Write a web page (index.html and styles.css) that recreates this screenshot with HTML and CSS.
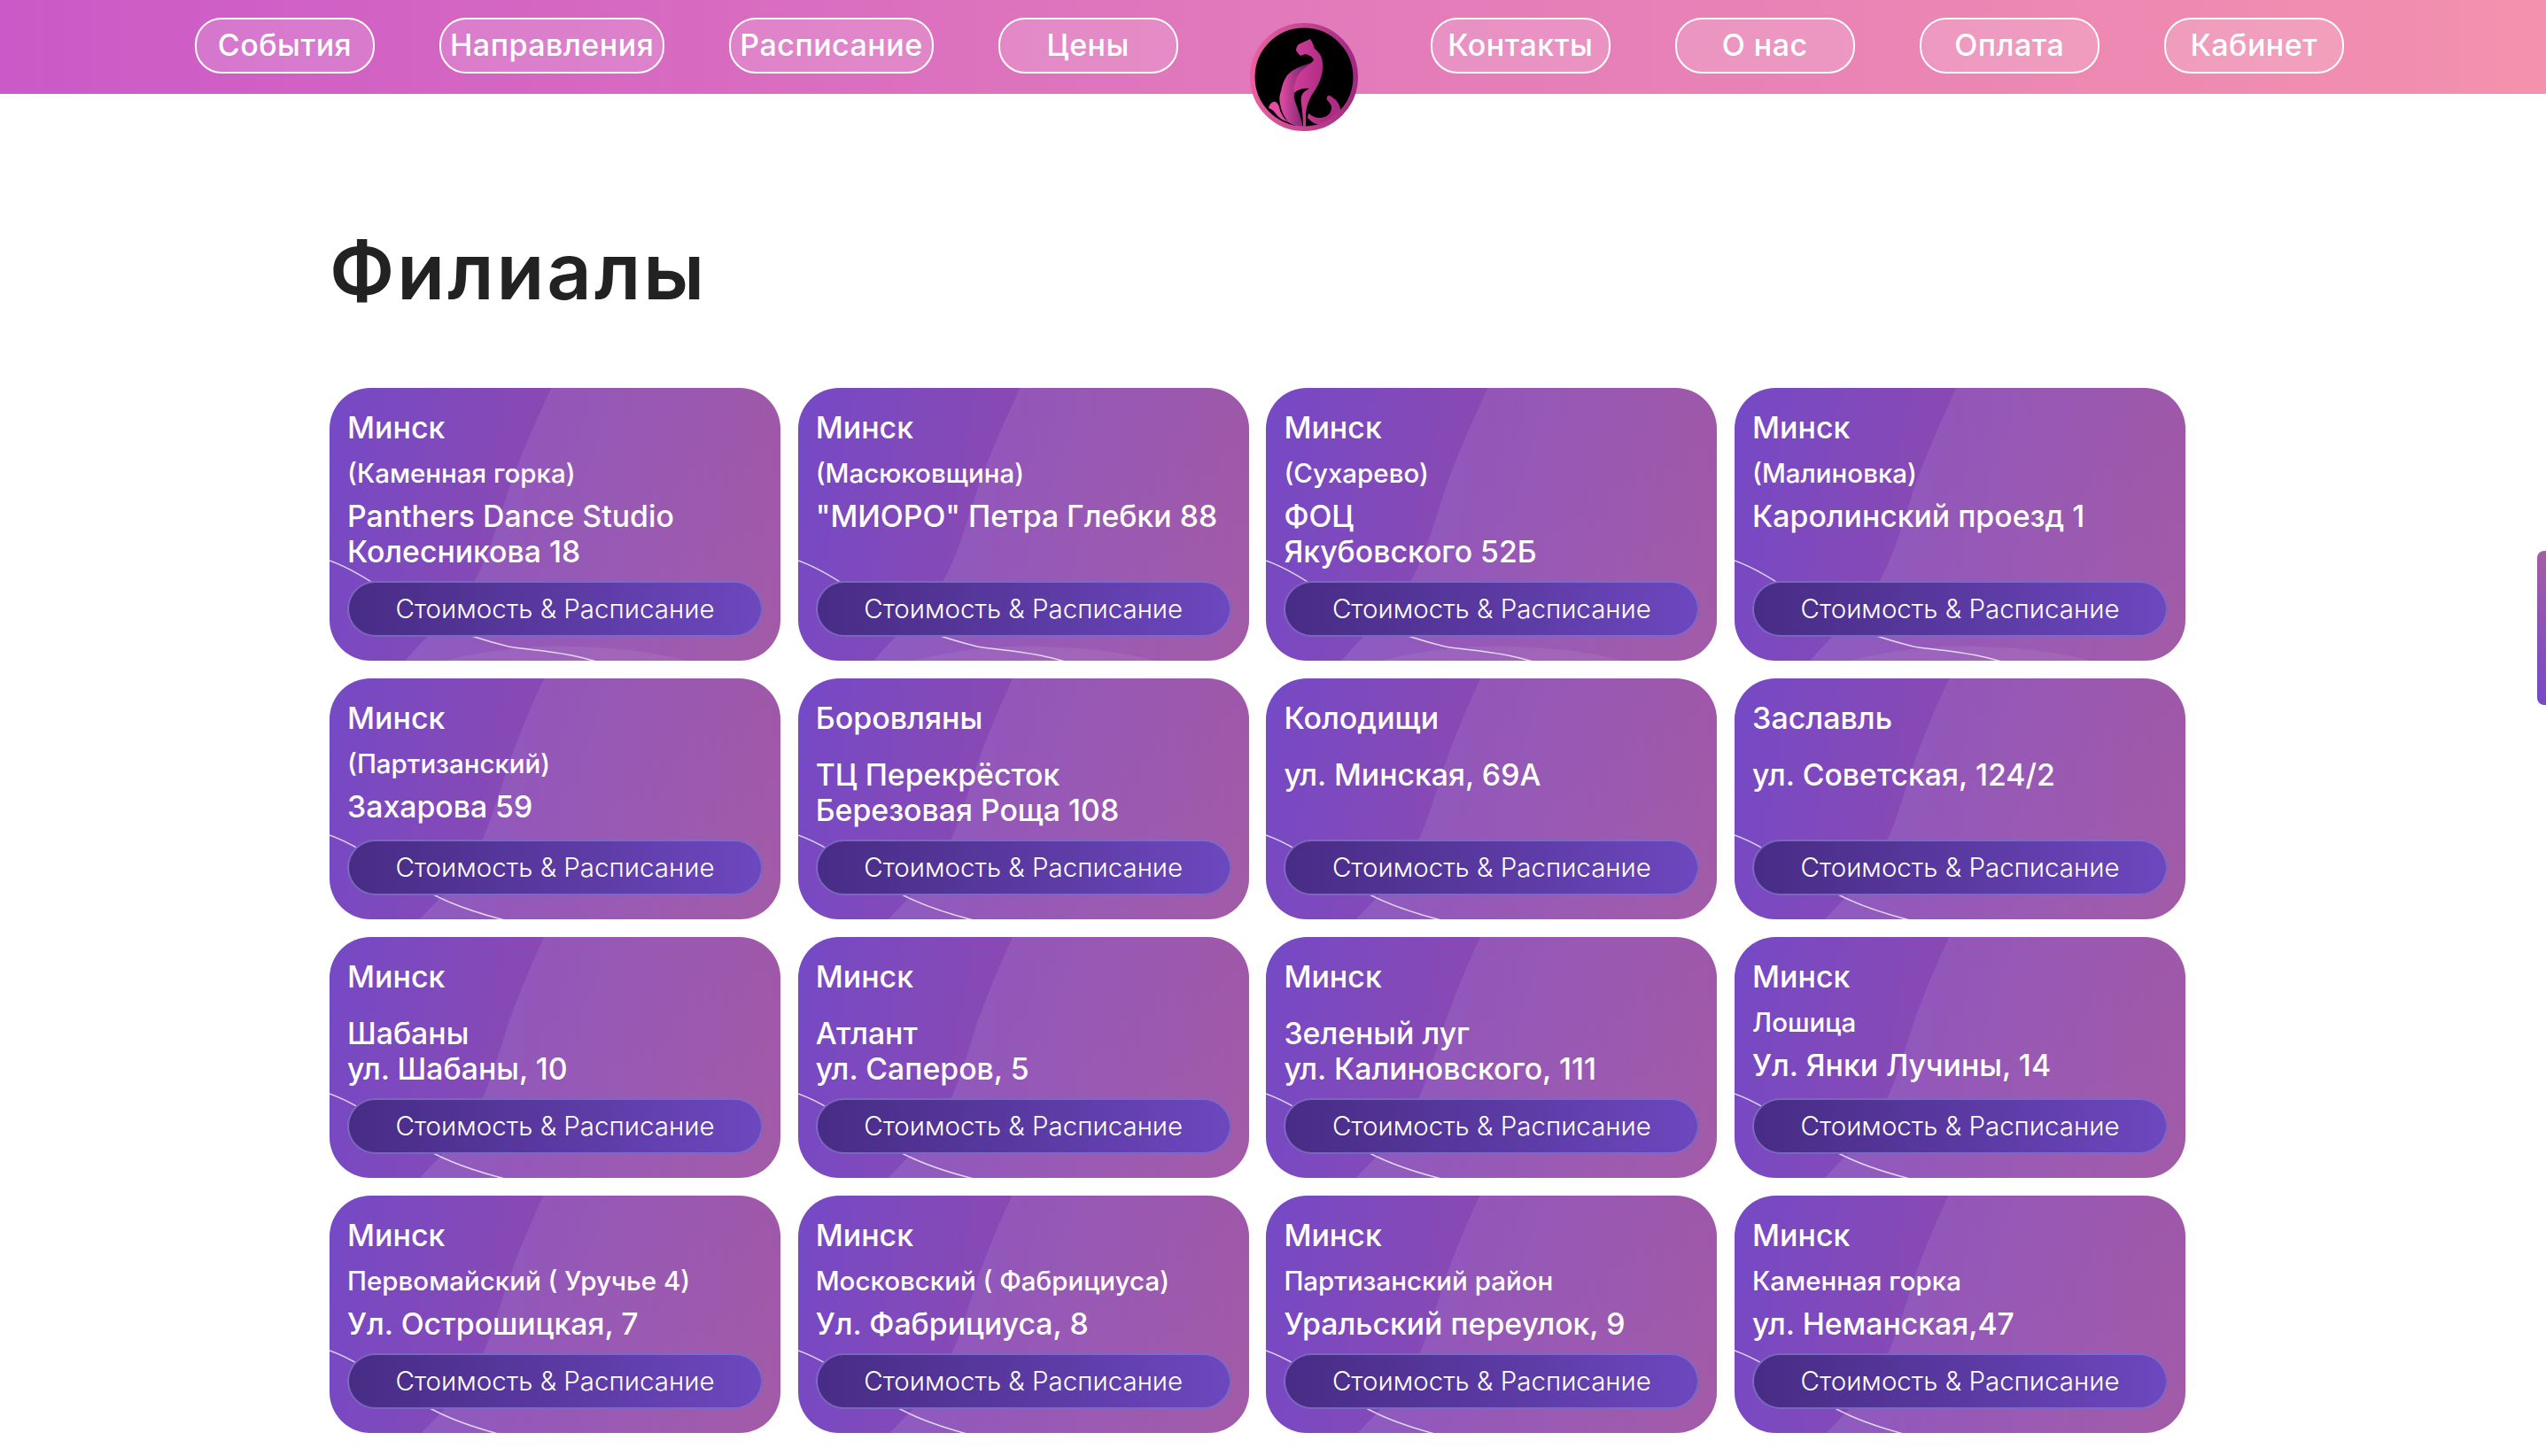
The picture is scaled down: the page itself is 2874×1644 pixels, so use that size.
FILE: index.html
```html
<!DOCTYPE html>
<html lang="ru">

<head>
    <meta charset="UTF-8">
    <title>Филиалы</title>
    <link rel="stylesheet" href="styles.css">
</head>

<body>

    <svg class="defs" width="0" height="0">
        <defs>
            <linearGradient id="swoosh-fill" x1="0" y1="0" x2="1" y2="0">
                <stop offset="0" stop-color="#fff" stop-opacity="0.11"/>
                <stop offset="0.6" stop-color="#fff" stop-opacity="0.06"/>
                <stop offset="1" stop-color="#fff" stop-opacity="0"/>
            </linearGradient>
            <linearGradient id="ring-fill" x1="0" y1="0" x2="1" y2="0">
                <stop offset="0" stop-color="#e8609f"/>
                <stop offset="1" stop-color="#a02a80"/>
            </linearGradient>
            <linearGradient id="haunch-fill" gradientUnits="userSpaceOnUse" x1="33" y1="0" x2="62" y2="0">
                <stop offset="0" stop-color="#e84da6"/>
                <stop offset="1" stop-color="#7a2470"/>
            </linearGradient>
            <linearGradient id="neck-fill" gradientUnits="userSpaceOnUse" x1="48" y1="0" x2="84" y2="0">
                <stop offset="0" stop-color="#d23f97"/>
                <stop offset="1" stop-color="#ae2c84"/>
            </linearGradient>
            <symbol id="card-art" viewBox="0 0 509 340" preserveAspectRatio="none">
                <path d="M262 -10 C240 40 222 75 202 131 C188 175 178 210 163 235 C145 265 120 285 86 323 L60 345 L509 345 L509 -10 Z" fill="url(#swoosh-fill)"/>
                <path d="M134 323 C180 312 230 306 273 308 C320 309 365 314 399 323 L420 340 L120 340 Z" fill="#fff" fill-opacity="0.07"/>
                <path d="M0 211 C40 225 80 260 117 278 C140 290 170 300 202 308 C230 313 273 312 330 335" fill="none" stroke="#fff" stroke-opacity="0.75" stroke-width="1.5"/>
            </symbol>
        </defs>
    </svg>

    <!-- Шапка -->
    <header class="top-bar">
        <a class="nav-pill">События</a>
        <a class="nav-pill">Направления</a>
        <a class="nav-pill">Расписание</a>
        <a class="nav-pill">Цены</a>
        <svg class="logo" viewBox="0 0 122 122">
            <circle cx="61" cy="61" r="57" fill="#000"/>
            <path fill="url(#haunch-fill)" d="M72 42 C70 45 66 46 63 47 C59 48 56 50 53 51 C48 53 45 56 42 59 C38 65 36 71 35 77 C33 82 33 87 34 91 C35 97 37 103 40 107 C41 109 42 111 43 112 C48 115 54 117 60 118 C58 108 54 97 50 86 C49 80 51 74 56 64 C60 55 66 48 72 42 Z"/>
            <path fill="url(#neck-fill)" d="M68 18 C71 22 72 26 73 29 C78 33 82 38 82 46 C83 58 78 70 70 81 C65 90 63 97 63 106 L63 118 L60 118 C60 108 59 98 58 92 C57 86 58 80 61 78 C63 76 65 75 67 74 C60 73 54 75 50 79 C49 70 52 60 58 54 C62 50 68 47 72 42 C71 39 69 37 67 37 C65 35 62 35 60 36 C58 37 56 37 55 35 L52 31 C52 28 53 26 55 24 C59 22 64 20 68 18 Z"/>
            <path fill="url(#neck-fill)" d="M66 102 C70 105 74 107 78 107 C83 107 88 105 90 102 C92 99 92 96 92 94 C91 91 89 89 87 87 C86 84 88 81 90 82 C96 85 101 90 102 97 C102 102 99 106 95 109 C88 113 81 115 75 114 C71 113 68 110 65 107 Z"/>
            <path fill="url(#haunch-fill)" d="M21 96 C22 91 26 88 29 89 C32 91 33 94 34 99 C36 104 39 108 43 112 C36 110 31 105 28 101 C26 98 23 97 21 96 Z"/>
            <circle cx="61" cy="61" r="58.2" fill="none" stroke="url(#ring-fill)" stroke-width="5.6"/>
        </svg>
        <a class="nav-pill">Контакты</a>
        <a class="nav-pill">О нас</a>
        <a class="nav-pill">Оплата</a>
        <a class="nav-pill">Кабинет</a>
    </header>

    <main class="branches">
        <h1 class="page-title">Филиалы</h1>

        <div class="branch-grid">
            <article class="branch-card">
                <svg class="card-art"><use href="#card-art"/></svg>
                <div class="city">Минск</div>
                <div class="district">(Каменная горка)</div>
                <div class="address">Panthers Dance Studio<br>Колесникова 18</div>
                <a class="card-btn">Стоимость &amp; Расписание</a>
            </article>
            <article class="branch-card">
                <svg class="card-art"><use href="#card-art"/></svg>
                <div class="city">Минск</div>
                <div class="district">(Масюковщина)</div>
                <div class="address">"МИОРО" Петра Глебки 88</div>
                <a class="card-btn">Стоимость &amp; Расписание</a>
            </article>
            <article class="branch-card">
                <svg class="card-art"><use href="#card-art"/></svg>
                <div class="city">Минск</div>
                <div class="district">(Сухарево)</div>
                <div class="address">ФОЦ<br>Якубовского 52Б</div>
                <a class="card-btn">Стоимость &amp; Расписание</a>
            </article>
            <article class="branch-card">
                <svg class="card-art"><use href="#card-art"/></svg>
                <div class="city">Минск</div>
                <div class="district">(Малиновка)</div>
                <div class="address">Каролинский проезд 1</div>
                <a class="card-btn">Стоимость &amp; Расписание</a>
            </article>

            <article class="branch-card">
                <svg class="card-art"><use href="#card-art"/></svg>
                <div class="city">Минск</div>
                <div class="district">(Партизанский)</div>
                <div class="address">Захарова 59</div>
                <a class="card-btn">Стоимость &amp; Расписание</a>
            </article>
            <article class="branch-card">
                <svg class="card-art"><use href="#card-art"/></svg>
                <div class="city">Боровляны</div>
                <div class="district"></div>
                <div class="address">ТЦ Перекрёсток<br>Березовая Роща 108</div>
                <a class="card-btn">Стоимость &amp; Расписание</a>
            </article>
            <article class="branch-card">
                <svg class="card-art"><use href="#card-art"/></svg>
                <div class="city">Колодищи</div>
                <div class="district"></div>
                <div class="address">ул. Минская, 69А</div>
                <a class="card-btn">Стоимость &amp; Расписание</a>
            </article>
            <article class="branch-card">
                <svg class="card-art"><use href="#card-art"/></svg>
                <div class="city">Заславль</div>
                <div class="district"></div>
                <div class="address">ул. Советская, 124/2</div>
                <a class="card-btn">Стоимость &amp; Расписание</a>
            </article>

            <article class="branch-card">
                <svg class="card-art"><use href="#card-art"/></svg>
                <div class="city">Минск</div>
                <div class="district"></div>
                <div class="address">Шабаны<br>ул. Шабаны, 10</div>
                <a class="card-btn">Стоимость &amp; Расписание</a>
            </article>
            <article class="branch-card">
                <svg class="card-art"><use href="#card-art"/></svg>
                <div class="city">Минск</div>
                <div class="district"></div>
                <div class="address">Атлант<br>ул. Саперов, 5</div>
                <a class="card-btn">Стоимость &amp; Расписание</a>
            </article>
            <article class="branch-card">
                <svg class="card-art"><use href="#card-art"/></svg>
                <div class="city">Минск</div>
                <div class="district"></div>
                <div class="address">Зеленый луг<br>ул. Калиновского, 111</div>
                <a class="card-btn">Стоимость &amp; Расписание</a>
            </article>
            <article class="branch-card">
                <svg class="card-art"><use href="#card-art"/></svg>
                <div class="city">Минск</div>
                <div class="district">Лошица</div>
                <div class="address">Ул. Янки Лучины, 14</div>
                <a class="card-btn">Стоимость &amp; Расписание</a>
            </article>

            <article class="branch-card">
                <svg class="card-art"><use href="#card-art"/></svg>
                <div class="city">Минск</div>
                <div class="district">Первомайский ( Уручье 4)</div>
                <div class="address">Ул. Острошицкая, 7</div>
                <a class="card-btn">Стоимость &amp; Расписание</a>
            </article>
            <article class="branch-card">
                <svg class="card-art"><use href="#card-art"/></svg>
                <div class="city">Минск</div>
                <div class="district">Московский ( Фабрициуса)</div>
                <div class="address">Ул. Фабрициуса, 8</div>
                <a class="card-btn">Стоимость &amp; Расписание</a>
            </article>
            <article class="branch-card">
                <svg class="card-art"><use href="#card-art"/></svg>
                <div class="city">Минск</div>
                <div class="district">Партизанский район</div>
                <div class="address">Уральский переулок, 9</div>
                <a class="card-btn">Стоимость &amp; Расписание</a>
            </article>
            <article class="branch-card">
                <svg class="card-art"><use href="#card-art"/></svg>
                <div class="city">Минск</div>
                <div class="district">Каменная горка</div>
                <div class="address">ул. Неманская,47</div>
                <a class="card-btn">Стоимость &amp; Расписание</a>
            </article>
        </div>
    </main>

    <div class="side-tab"></div>

</body>

</html>
```

FILE: styles.css
```css
body {
    margin: 0;
    background-color: #fff;
    font-family: Inter, "Noto Sans", sans-serif;
    color: #fff;
}

.defs {
    position: absolute;
}

.top-bar {
    box-sizing: border-box;
    display: flex;
    align-items: center;
    gap: 73px;
    height: 106px;
    padding: 0 0 3px 220px;
    background: linear-gradient(90deg, #cb59c7 0%, #e279bb 50%, #f391ae 100%);
}

.nav-pill {
    box-sizing: border-box;
    min-width: 203px;
    height: 63px;
    padding: 0 10px;
    border: 2px solid #fff;
    border-radius: 30px;
    background-color: rgba(255, 255, 255, 0.16);
    font-size: 34px;
    font-weight: 500;
    letter-spacing: 0.5px;
    line-height: 57px;
    text-align: center;
    white-space: nowrap;
}

.logo {
    align-self: flex-start;
    flex: none;
    width: 122px;
    height: 122px;
    margin: 26px 9px 0 8px;
}

.branches {
    padding: 151px 0 0 372px;
}

.page-title {
    margin: 0 0 83px;
    color: #222;
    font-size: 88px;
    font-weight: 600;
    letter-spacing: 3px;
    line-height: 98px;
}

.branch-grid {
    display: grid;
    grid-template-columns: repeat(4, 509px);
    gap: 20px 19.7px;
}

.branch-card {
    position: relative;
    display: flex;
    flex-direction: column;
    overflow: hidden;
    padding: 25px 20px 27px;
    border-radius: 46px;
    background: linear-gradient(100deg, #7549c6 0%, #8a49b3 45%, #a35ba7 100%);
}

.card-art {
    position: absolute;
    top: 50%;
    left: 0;
    width: 509px;
    height: 340px;
    margin-top: -170px;
}

.city,
.district,
.address,
.card-btn {
    position: relative;
}

.city {
    padding-bottom: 11px;
    font-size: 34px;
    font-weight: 500;
    line-height: 40px;
}

.district {
    padding: 2px 0 11px;
    font-size: 29.5px;
    font-weight: 500;
    line-height: 36px;
}

.address {
    margin-bottom: 13px;
    font-size: 33.8px;
    font-weight: 500;
    line-height: 40px;
}

.card-btn {
    box-sizing: border-box;
    height: 63px;
    margin-top: auto;
    border: 2px solid rgba(132, 112, 200, 0.85);
    border-radius: 32px;
    background: linear-gradient(90deg, #472c85 0%, #6d47be 100%);
    font-size: 29.5px;
    font-weight: 300;
    line-height: 59px;
    text-align: center;
}

.side-tab {
    position: absolute;
    top: 622px;
    right: 0;
    width: 10px;
    height: 174px;
    border-radius: 8px 0 0 8px;
    background: linear-gradient(180deg, #a55ca6 0%, #7549c6 100%);
}
```
